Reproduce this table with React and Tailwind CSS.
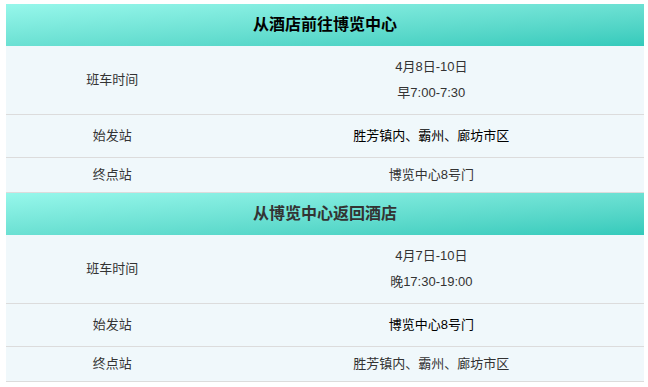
import React from 'react';

const sections = [
    {
        title: '从酒店前往博览中心',
        titleColor: 'text-black',
        dates: '4月8日-10日',
        hours: '早7:00-7:30',
        from: '胜芳镇内、霸州、廊坊市区',
        to: '博览中心8号门',
    },
    {
        title: '从博览中心返回酒店',
        titleColor: 'text-[#333]',
        dates: '4月7日-10日',
        hours: '晚17:30-19:00',
        from: '博览中心8号门',
        to: '胜芳镇内、霸州、廊坊市区',
    },
];

const Row = ({ label, height, children }) => (
    <div className={`grid grid-cols-[1fr_2fr] items-center border-b border-[#dcdcdc] bg-[#f0f8fb] ${height}`}>
        <div className="text-center text-[#333]">{label}</div>
        <div className="text-center">{children}</div>
    </div>
);

const App = () => {
    return (
        <div
            className="bg-white w-[648px] h-[387px] pt-[4px] px-[6px] text-[13px] leading-[18px]"
            style={{ fontFamily: '"Liberation Sans", "Noto Sans CJK SC", sans-serif' }}
        >
            <div className="w-[638px]">
                {sections.map((s) => (
                    <div key={s.title}>
                        <div
                            className={`h-[42px] flex items-center justify-center bg-gradient-to-br from-[#96f7eb] to-[#33cabb] text-[16px] font-bold ${s.titleColor}`}
                        >
                            {s.title}
                        </div>
                        <Row label="班车时间" height="h-[69px]">
                            <div className="flex flex-col gap-[8px] text-[#333]">
                                <span>{s.dates}</span>
                                <span>{s.hours}</span>
                            </div>
                        </Row>
                        <Row label="始发站" height="h-[43px]">
                            <span className="text-black">{s.from}</span>
                        </Row>
                        <Row label="终点站" height="h-[35px]">
                            <span className="text-[#333]">{s.to}</span>
                        </Row>
                    </div>
                ))}
            </div>
        </div>
    );
};

export default App;
